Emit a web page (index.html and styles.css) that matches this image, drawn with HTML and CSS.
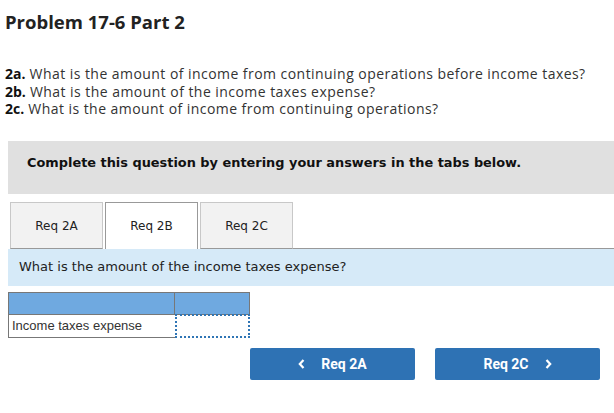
FILE: index.html
```html
<!DOCTYPE html>
<html>
<head>
<meta charset="utf-8">
<link rel="stylesheet" href="styles.css">
</head>
<body>
<div class="page">
  <h1 class="title">Problem 17-6 Part 2</h1>
  <div class="questions">
    <p><b>2a.</b> What is the amount of income from continuing operations before income taxes?</p>
    <p><b>2b.</b> What is the amount of the income taxes expense?</p>
    <p><b>2c.</b> What is the amount of income from continuing operations?</p>
  </div>
  <div class="instr">Complete this question by entering your answers in the tabs below.</div>
  <div class="tabs">
    <div class="tab">Req 2A</div>
    <div class="tab active">Req 2B</div>
    <div class="tab">Req 2C</div>
    <div class="tab-fill"></div>
  </div>
  <div class="prompt">What is the amount of the income taxes expense?</div>
  <div class="grid">
    <div class="hcell c1"></div>
    <div class="hcell c2"></div>
    <div class="cell c1">Income taxes expense</div>
    <div class="cell c2 input"></div>
  </div>
  <div class="nav">
    <button class="btn"><svg class="chev left" width="7" height="10" viewBox="0 0 7 10"><path d="M5.5 1 L1.8 5 L5.5 9" fill="none" stroke="#fff" stroke-width="2.2"/></svg>Req 2A</button>
    <button class="btn">Req 2C<svg class="chev right" width="7" height="10" viewBox="0 0 7 10"><path d="M1.5 1 L5.2 5 L1.5 9" fill="none" stroke="#fff" stroke-width="2.2"/></svg></button>
  </div>
</div>
</body>
</html>
```
FILE: styles.css
```css
* { box-sizing: border-box; }
body { margin: 0; background: #fff; }
.page { padding: 0 0 0 8px; }
.title {
  font-family: "Open Sans", sans-serif;
  font-weight: 700;
  font-size: 18.5px;
  color: #222;
  margin: 0 0 0 -3px;
  padding-top: 10px;
  line-height: 24px;
}
.questions {
  margin: 31px 0 0 -3px;
  font-family: "Open Sans", sans-serif;
  font-size: 14px;
  letter-spacing: 0.45px;
  color: #333;
}
.questions p { margin: 0; line-height: 17.5px; }
.questions b { color: #111; letter-spacing: 0; }
.instr {
  margin-top: 23px;
  background: #e0e0e0;
  height: 53px;
  padding: 14px 0 0 19px;
  font-family: "DejaVu Sans", Verdana, sans-serif;
  font-weight: 700;
  font-size: 12.9px;
  color: #111;
}
.tabs {
  display: flex;
  margin-top: 8px;
  height: 47px;
  padding-left: 2px;
}
.tab {
  width: 93px;
  margin-right: 2px;
  background: #f2f2f2;
  border: 1px solid #c8c8c8;
  border-bottom: 1px solid #999;
  font-family: "DejaVu Sans", Verdana, sans-serif;
  font-size: 12px;
  color: #222;
  display: flex;
  align-items: center;
  justify-content: center;
  padding-top: 1px;
}
.tab.active {
  background: #fff;
  border: 1px solid #999;
  border-bottom: none;
  padding-bottom: 1px;
}
.tab-fill { flex: 1; border-bottom: 1px solid #999; margin-left: -2px; }
.prompt {
  background: #d6eaf8;
  height: 37px;
  padding: 10px 0 0 11px;
  font-family: "DejaVu Sans", Verdana, sans-serif;
  font-size: 13px;
  color: #222;
}
.grid {
  margin-top: 6px;
  display: grid;
  grid-template-columns: 167px 75px;
  width: 242px;
}
.hcell {
  height: 23px;
  background: #6fa9e0;
  border-top: 1px solid #777;
  border-bottom: 1px solid #777;
}
.hcell.c1 { border-left: 1px solid #777; border-right: 1px solid #777; }
.hcell.c2 { border-right: 1px solid #777; }
.cell {
  height: 23px;
  font-family: "Liberation Sans", Arial, sans-serif;
  font-size: 13px;
  color: #333;
  line-height: 21px;
  padding-left: 3px;
}
.cell.c1 { border-left: 1px solid #777; border-bottom: 1px solid #777; }
.cell.input { border: 2px dotted #2f75b5; margin-top: -1px; height: 24px; }
.nav {
  display: flex;
  gap: 20px;
  margin-top: 10px;
  padding-left: 242px;
}
.btn {
  width: 165px;
  height: 32px;
  background: #2e72b4;
  border: none;
  border-radius: 2px;
  color: #fff;
  font-family: Roboto, sans-serif;
  font-weight: 700;
  font-size: 14px;
  display: flex;
  align-items: center;
  justify-content: center;
  padding: 0;
}
.chev.left { margin-right: 16px; }
.chev.right { margin-left: 16px; }
```
